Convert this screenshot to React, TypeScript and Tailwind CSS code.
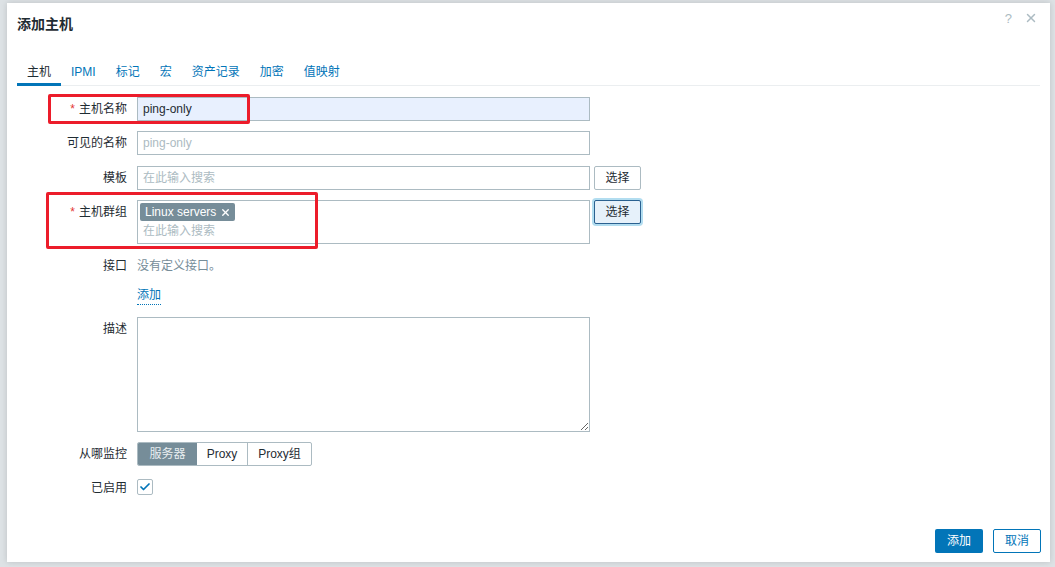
import { Check, X } from "lucide-react";

const FONT = { fontFamily: '"Liberation Sans", Arial, "Noto Sans CJK SC", sans-serif' };

function Label({ text, required }: { text: string; required?: boolean }) {
  return (
    <div className="w-[110px] shrink-0 text-right leading-[24px] text-[12px] text-[#1f2c33]">
      {required && <span className="text-[#e33734] mr-[4px]">*</span>}
      {text}
    </div>
  );
}

function Row({
  label,
  required,
  className,
  children,
}: {
  label: string;
  required?: boolean;
  className?: string;
  children: React.ReactNode;
}) {
  return (
    <div className={"flex items-start gap-[10px] " + (className ?? "")}>
      <Label text={label} required={required} />
      <div className="flex items-start gap-[4px]">{children}</div>
    </div>
  );
}

const tabs = ["主机", "IPMI", "标记", "宏", "资产记录", "加密", "值映射"];

export default function App() {
  return (
    <div className="w-[1055px] h-[567px] bg-[#dde2e5] overflow-hidden relative" style={FONT}>
      <div className="ml-[7px] mt-[3px] w-[1043px] h-[559px] bg-white shadow-[0_0_6px_rgba(0,0,0,0.15)] flex flex-col relative">
        {/* header */}
        <div className="h-[44px] flex items-center justify-between pl-[10px] pr-[12px]">
          <div className="text-[14px] font-bold text-[#1f2c33] -mt-[1px]">添加主机</div>
          <div className="flex items-center gap-[12px] self-start mt-[8px] text-[#acbbc2]">
            <span className="text-[13px] leading-none">?</span>
            <X size={14} strokeWidth={2.5} />
          </div>
        </div>

        {/* tabs */}
        <div className="mx-[10px] mt-[16px] flex border-b border-[#ebeef0]">
          {tabs.map((t, i) => (
            <div
              key={t}
              className={
                i === 0
                  ? "px-[10px] pb-[2px] leading-[18px] text-[12px] text-[#1f2c33] border-b-[3px] border-[#0275b8] -mb-px"
                  : "px-[10px] pb-[2px] leading-[18px] text-[12px] text-[#0275b8]"
              }
            >
              {t}
            </div>
          ))}
        </div>

        {/* form */}
        <div className="pl-[10px] pt-[11px] flex flex-col gap-[10px]">
          <Row label="主机名称" required>
            <div className="w-[453px] h-[24px] border border-[#acbbc2] bg-[#e8f0fe] px-[5px] flex items-center text-[12px] text-[#1f2c33]">
              ping-only
            </div>
          </Row>
          <Row label="可见的名称">
            <div className="w-[453px] h-[24px] border border-[#acbbc2] bg-white px-[5px] flex items-center text-[12px] text-[#acbbc2]">
              ping-only
            </div>
          </Row>
          <Row label="模板" className="mt-[1px]">
            <div className="w-[453px] h-[24px] border border-[#acbbc2] bg-white px-[5px] flex items-center text-[12px] text-[#acbbc2]">
              在此输入搜索
            </div>
            <div className="w-[47px] h-[24px] border border-[#acbbc2] rounded-[2px] bg-white flex items-center justify-center text-[12px] text-[#1f2c33]">
              选择
            </div>
          </Row>
          <Row label="主机群组" required>
            <div className="w-[453px] h-[44px] border border-[#acbbc2] bg-white px-[2px] pt-[2px] flex flex-col text-[12px]">
              <div className="self-start h-[18px] rounded-[2px] bg-[#768d99] text-white pl-[5px] pr-[4px] flex items-center gap-[4px]">
                Linux servers
                <X size={11} strokeWidth={3} />
              </div>
              <div className="pl-[3px] leading-[20px] text-[#acbbc2]">在此输入搜索</div>
            </div>
            <div className="w-[47px] h-[24px] border border-[#2a6190] rounded-[2px] bg-[#e6f1fa] shadow-[0_0_0_2px_rgba(1,144,205,0.3)] flex items-center justify-center text-[12px] text-[#1f2c33]">
              选择
            </div>
          </Row>
          <Row label="接口">
            <div className="leading-[24px] text-[12px] text-[#768d99]">没有定义接口。</div>
          </Row>
          <div className="flex gap-[10px] -mt-[2px]">
            <div className="w-[110px]" />
            <span className="leading-[18px] text-[12px] text-[#0275b8] border-b border-dotted border-[#0275b8]">添加</span>
          </div>
          <Row label="描述" className="mt-[2px]">
            <textarea className="w-[453px] h-[115px] border border-[#acbbc2] bg-white block outline-none" />
          </Row>
          <Row label="从哪监控">
            <div className="flex h-[24px] border border-[#acbbc2] rounded-[2px] text-[12px] overflow-hidden">
              <div className="w-[59px] bg-[#768d99] text-[#e8edf0] flex items-center justify-center">服务器</div>
              <div className="w-[51px] border-r border-[#acbbc2] text-[#1f2c33] flex items-center justify-center">Proxy</div>
              <div className="w-[63px] text-[#1f2c33] flex items-center justify-center">Proxy组</div>
            </div>
          </Row>
          <Row label="已启用">
            <div className="mt-[3px] w-[16px] h-[16px] border border-[#acbbc2] rounded-[2px] bg-white flex items-center justify-center text-[#0275b8]">
              <Check size={12} strokeWidth={3.5} />
            </div>
          </Row>
        </div>

        {/* footer */}
        <div className="mt-auto mb-[9px] mr-[9px] flex justify-end gap-[10px]">
          <div className="w-[48px] h-[24px] rounded-[2px] bg-[#0275b8] text-white text-[12px] flex items-center justify-center">
            添加
          </div>
          <div className="w-[48px] h-[24px] rounded-[2px] border border-[#0275b8] bg-white text-[#0275b8] text-[12px] flex items-center justify-center">
            取消
          </div>
        </div>

        {/* annotation boxes */}
        <div className="absolute left-[41px] top-[91px] w-[202px] h-[30px] border-[3px] border-[#ec1c2a] rounded-[2px]" />
        <div className="absolute left-[39px] top-[189px] w-[272px] h-[57px] border-[3px] border-[#ec1c2a] rounded-[2px]" />
      </div>
    </div>
  );
}
